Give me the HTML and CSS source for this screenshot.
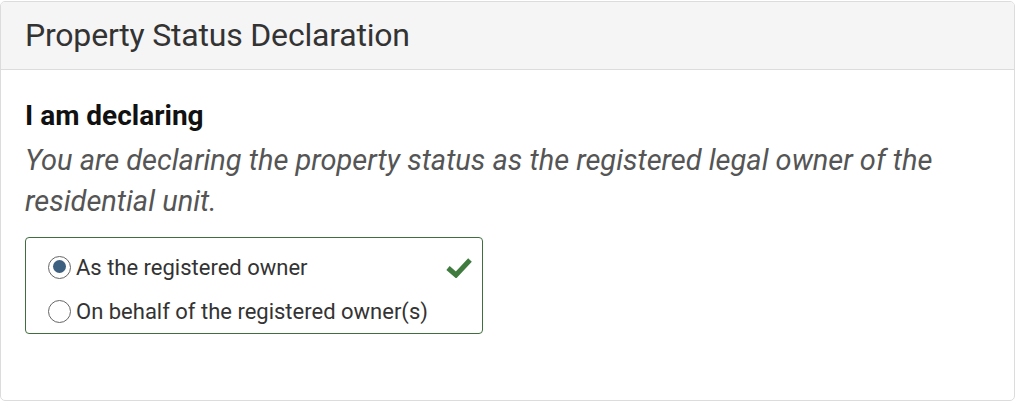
FILE: index.html
```html
<!DOCTYPE html>
<html>
<head>
<meta charset="utf-8">
<link rel="stylesheet" href="styles.css">
</head>
<body>
<div class="card">
  <div class="card-header">Property Status Declaration</div>
  <div class="card-body">
    <div class="label">I am declaring</div>
    <div class="hint">You are declaring the property status as the registered legal owner of the residential unit.</div>
    <div class="options">
      <label class="option">
        <span class="radio checked"></span>
        <span class="opt-text">As the registered owner</span>
        <svg class="check" viewBox="0 0 26 22" width="26" height="22"><path d="M2 12 L10 19 L24 4" fill="none" stroke="#3f7a3f" stroke-width="5" stroke-linejoin="miter"/></svg>
      </label>
      <label class="option">
        <span class="radio"></span>
        <span class="opt-text">On behalf of the registered owner(s)</span>
      </label>
    </div>
  </div>
</div>
</body>
</html>
```
FILE: styles.css
```css
html, body { margin: 0; padding: 0; background: #fff; }
body { font-family: Roboto, "Liberation Sans", sans-serif; color: #222; }
.card {
  margin: 1px 9px 0 0;
  border: 1px solid #dcdcdc;
  border-radius: 5px;
  height: 400px;
  box-sizing: border-box;
  overflow: hidden;
}
.card-header {
  background: #f5f5f5;
  border-bottom: 1px solid #dcdcdc;
  height: 68px;
  box-sizing: border-box;
  padding: 0 0 2px 24px;
  display: flex;
  align-items: center;
  font-size: 32px;
  color: #333;
  letter-spacing: -0.2px;
}
.card-body { padding: 29px 0 0 24px; }
.label { font-size: 28px; font-weight: 700; color: #111; line-height: 34px; }
.hint {
  font-style: italic; font-size: 29px; color: #555; line-height: 41px;
  margin-top: 7px; width: 960px;
}
.options {
  margin-top: 15px;
  width: 458px; height: 97px;
  box-sizing: border-box;
  border: 1.5px solid #3f6f3f;
  border-radius: 4px;
  padding: 7px 0 0 22px;
}
.option { display: flex; align-items: center; height: 44px; font-size: 22px; color: #333; }
.radio {
  width: 23px; height: 23px; border-radius: 50%; flex: none;
  border: 1.5px solid #666; box-sizing: border-box; margin-right: 5px;
  position: relative; background: #fff;
}
.radio.checked::after {
  content: ""; position: absolute; left: 3.5px; top: 3.5px; width: 13px; height: 13px;
  border-radius: 50%; background: #3d5f80;
}
.check { margin-left: auto; margin-right: 10px; }
```
